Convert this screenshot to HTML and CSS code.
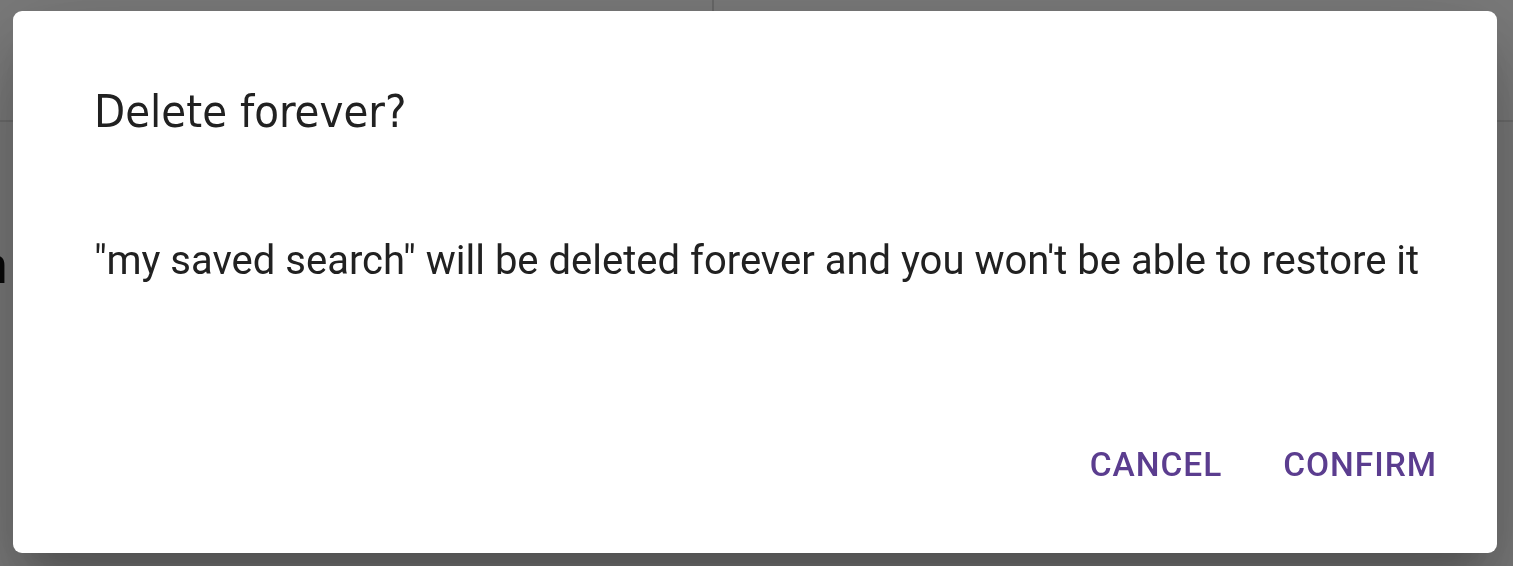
FILE: index.html
```html
<!DOCTYPE html>
<html lang="en">
<head>
<meta charset="utf-8">
<title>Delete forever?</title>
<link rel="stylesheet" href="styles.css">
</head>
<body>
<div class="page">
  <div class="page-header">
    <div class="pane pane-left"></div>
    <div class="pane pane-right"></div>
  </div>
  <div class="page-main">
    <div class="page-text">Open</div>
  </div>
</div>
<div class="backdrop">
  <div class="dialog" role="dialog" aria-labelledby="dlg-title">
    <h2 class="dialog-title" id="dlg-title">Delete forever?</h2>
    <p class="dialog-content">"my saved search" will be deleted forever and you won't be able to restore it</p>
    <div class="dialog-actions">
      <button class="btn" type="button">Cancel</button>
      <button class="btn" type="button">Confirm</button>
    </div>
  </div>
</div>
</body>
</html>
```

FILE: styles.css
```css
html, body {
  margin: 0;
  padding: 0;
  width: 100%;
  height: 100%;
  overflow: hidden;
}

body {
  font-family: Roboto, "Liberation Sans", sans-serif;
  background: #f2f2f2;
  position: relative;
}

.page {
  display: flex;
  flex-direction: column;
  height: 100%;
}

.page-header {
  display: flex;
  height: 122px;
  border-bottom: 2px solid #d8d8d8;
  box-sizing: border-box;
  background: #f4f4f4;
}

.pane-left {
  width: 712px;
  border-right: 2px solid #d0d0d0;
}

.pane-right {
  flex: 1;
}

.page-main {
  flex: 1;
  padding-top: 114px;
}

.page-text {
  width: 200px;
  margin-left: -192px;
  text-align: right;
  font-size: 52px;
  line-height: 60px;
  color: #111;
  white-space: nowrap;
}

.backdrop {
  position: fixed;
  inset: 0;
  background: rgba(0, 0, 0, 0.5);
  display: flex;
  align-items: flex-start;
  justify-content: flex-start;
  padding: 11px 16px 0 13px;
}

.dialog {
  width: 1484px;
  height: 542px;
  box-sizing: border-box;
  background: #fff;
  border-radius: 9px;
  box-shadow:
    0 25px 34px -16px rgba(0, 0, 0, 0.2),
    0 54px 85px 7px rgba(0, 0, 0, 0.14),
    0 20px 103px 18px rgba(0, 0, 0, 0.12);
  display: flex;
  flex-direction: column;
  padding: 74px 60px 49px 81px;
}

.dialog-title {
  margin: 0;
  font-family: "DejaVu Sans Condensed", "DejaVu Sans", sans-serif;
  font-stretch: condensed;
  font-weight: 400;
  font-size: 45px;
  line-height: 54px;
  color: #212121;
}

.dialog-content {
  margin: 95px 0 0;
  font-family: Roboto, sans-serif;
  font-size: 40px;
  line-height: 54px;
  color: #212121;
  white-space: nowrap;
}

.dialog-actions {
  margin-top: auto;
  display: flex;
  justify-content: flex-end;
  gap: 25px;
}

.btn {
  font-family: Roboto, sans-serif;
  font-weight: 500;
  font-size: 33.5px;
  line-height: 52px;
  letter-spacing: 0.02857em;
  text-transform: uppercase;
  color: #5b3d8f;
  background: none;
  border: 0;
  padding: 13px 18px;
  margin: 0;
  cursor: pointer;
}

.btn:last-child {
  padding-right: 0;
}
```
